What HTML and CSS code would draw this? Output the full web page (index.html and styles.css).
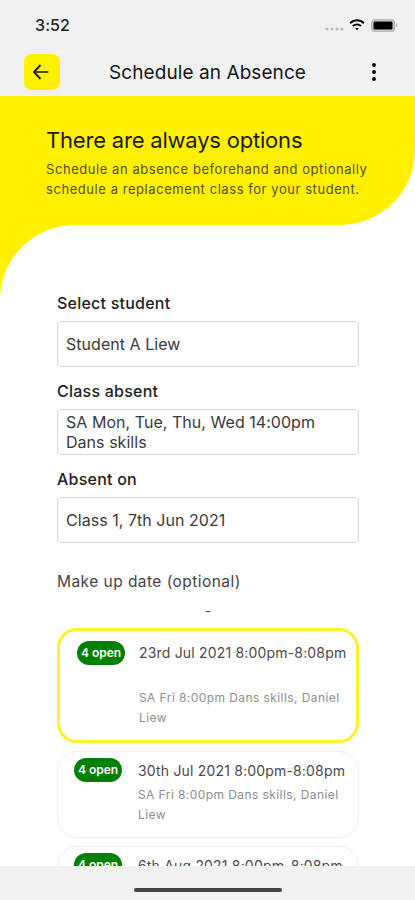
FILE: index.html
```html
<!DOCTYPE html>
<html lang="en">
<head>
<meta charset="utf-8">
<meta name="viewport" content="width=device-width, initial-scale=1">
<title>Schedule an Absence</title>
<link rel="stylesheet" href="styles.css">
</head>
<body>
<div class="screen">
  <header class="top">
    <div class="status">
      <span class="time">3:52</span>
      <div class="status-icons">
        <svg class="signal" width="19" height="4" viewBox="0 0 19 4" fill="#b9b9b9"><circle cx="2" cy="2" r="1.5"/><circle cx="7" cy="2" r="1.5"/><circle cx="12" cy="2" r="1.5"/><circle cx="17" cy="2" r="1.5"/></svg>
        <svg class="wifi" width="16" height="12" viewBox="0 0 16 12" fill="none" stroke="#111" stroke-width="2"><path d="M1 4.2C5 .3 11 .3 15 4.2"/><path d="M3.8 7.1c2.4-2.2 6-2.2 8.4 0"/><path d="M6.3 9.4 8 11.2l1.700-1.800c-1-.8-2.400-.8-3.400 0z" fill="#111" stroke="none"/></svg>
        <svg class="battery" width="27" height="13" viewBox="0 0 27 13"><rect x=".75" y=".75" width="22.500" height="11.500" rx="3" fill="#d2d2d2" stroke="#aaa" stroke-width="1.200"/><rect x="2.500" y="2.500" width="19" height="8" rx="1.200" fill="#000"/><path d="M24.800 4.500c1.600.6 1.600 3.400 0 4z" fill="#aaa"/></svg>
      </div>
    </div>
    <nav class="bar">
      <button class="back" aria-label="Back"><svg width="18" height="16" viewBox="0 0 18 16" fill="none" stroke="#222200" stroke-width="2"><path d="M8.500 1 2 8l6.500 7"/><path d="M2 8h14.500" stroke-width="1.600"/></svg></button>
      <h1>Schedule an Absence</h1>
      <button class="more" aria-label="More"><svg width="6" height="20" viewBox="0 0 6 20" fill="#111"><circle cx="3" cy="3" r="2"/><circle cx="3" cy="10" r="2"/><circle cx="3" cy="17" r="2"/></svg></button>
    </nav>
  </header>
  <main>
    <section class="hero-wrap">
      <div class="hero">
        <h2>There are always options</h2>
        <p>Schedule an absence beforehand and optionally</p>
        <p>schedule a replacement class for your student.</p>
      </div>
    </section>
    <section class="sheet-wrap">
      <div class="sheet">
        <label class="label">Select student</label>
        <div class="field">Student A Liew</div>
        <label class="label">Class absent</label>
        <div class="field">SA Mon, Tue, Thu, Wed 14:00pm<br>Dans skills</div>
        <label class="label">Absent on</label>
        <div class="field">Class 1, 7th Jun 2021</div>
        <h3>Make up date (optional)</h3>
        <div class="dash">-</div>
        <article class="card selected">
          <span class="badge">4 open</span>
          <div class="info"><h4>23rd Jul 2021 8:00pm-8:08pm</h4><p>SA Fri 8:00pm Dans skills, Daniel<br>Liew</p></div>
        </article>
        <article class="card">
          <span class="badge">4 open</span>
          <div class="info"><h4>30th Jul 2021 8:00pm-8:08pm</h4><p>SA Fri 8:00pm Dans skills, Daniel<br>Liew</p></div>
        </article>
        <article class="card">
          <span class="badge">4 open</span>
          <div class="info"><h4>6th Aug 2021 8:00pm-8:08pm</h4></div>
        </article>
      </div>
    </section>
  </main>
  <footer><div class="home"></div></footer>
</div>
</body>
</html>
```
FILE: styles.css
```css
* { box-sizing: border-box; margin: 0; padding: 0; }
body { font-family: Inter, "Liberation Sans", sans-serif; background: #fff; }
button { border: 0; background: none; }
svg { display: block; }
h1, h2, h3, h4 { font-weight: 400; }
.screen { height: 900px; display: flex; flex-direction: column; overflow: hidden; white-space: nowrap; }
.top { height: 96px; flex: none; background: #f1f1f1; }
.status { height: 50px; padding: 0 17px 0 35px; display: flex; justify-content: space-between; align-items: center; }
.time { font-size: 16px; font-weight: 500; color: #222; letter-spacing: .1px; }
.status-icons { display: flex; align-items: center; }
.signal { margin: 8px 5px 0 0; }
.wifi { margin-right: 6px; }
.bar { height: 46px; padding: 4px 38px 6px 24px; display: flex; align-items: center; }
.back { width: 36px; height: 36px; border-radius: 8px; background: #fff000; display: flex; align-items: center; justify-content: center; padding-right: 3px; }
h1 { font-size: 19px; line-height: 24px; color: #151515; letter-spacing: .08px; margin-left: 49px; padding-top: 2px; }
.more { margin-left: auto; }
main { flex: 1; min-height: 0; overflow: hidden; }
.hero-wrap { background: #fff; height: 129px; }
.hero { height: 129px; background: #fff000; border-radius: 0 0 75px 0; padding: 29px 0 0 46px; }
h2 { font-size: 22px; line-height: 30px; margin-bottom: 4px; color: #1d1b00; letter-spacing: -.2px; }
.hero p { font-size: 13px; line-height: 20px; color: #554f00; letter-spacing: .56px; }
.sheet-wrap { background: linear-gradient(#fff000 0 76px, #fff 76px); }
.sheet { background: #fff; border-radius: 75px 0 0 0; padding: 68px 56px 0 57px; }
.label { display: block; font-size: 16px; line-height: 20px; margin-bottom: 8px; color: #222; font-weight: 500; letter-spacing: .23px; }
.field { height: 46px; border: 1px solid #d8d8d8; border-radius: 4px; padding: 0 0 1px 8px; margin-bottom: 14px; display: flex; align-items: center; font-size: 16px; line-height: 20px; color: #3a3a3a; letter-spacing: .04px; }
h3 { font-size: 15.500px; line-height: 20px; padding-top: 15px; color: #444; letter-spacing: .45px; }
.dash { height: 36px; padding-top: 9px; text-align: center; font-size: 14px; line-height: 20px; color: #555; }
.card { display: flex; height: 87px; margin-bottom: 8px; border: 1px solid #eee; border-radius: 20px; padding: 6px 0 0 16px; }
.badge { width: 48px; height: 24px; border-radius: 12px; background: #008000; color: #fff; font-size: 12px; line-height: 24px; font-weight: 600; text-align: center; flex: none; }
.info { padding: 1px 0 0 16px; }
h4 { font-size: 14px; line-height: 24px; color: #4a4a4a; letter-spacing: .18px; }
.card p { font-size: 12px; line-height: 20px; color: #8d8d8d; letter-spacing: .42px; padding-top: 2px; }
.selected { height: 115px; border: 3px solid #fff030; padding: 10px 0 0 17px; }
.selected .info { padding: 0 0 0 14px; }
.selected p { padding-top: 23px; }
footer { height: 34px; flex: none; background: #f1f1f1; display: flex; justify-content: center; padding-top: 22px; }
.home { width: 148px; height: 4px; border-radius: 2px; background: #444; }
```
